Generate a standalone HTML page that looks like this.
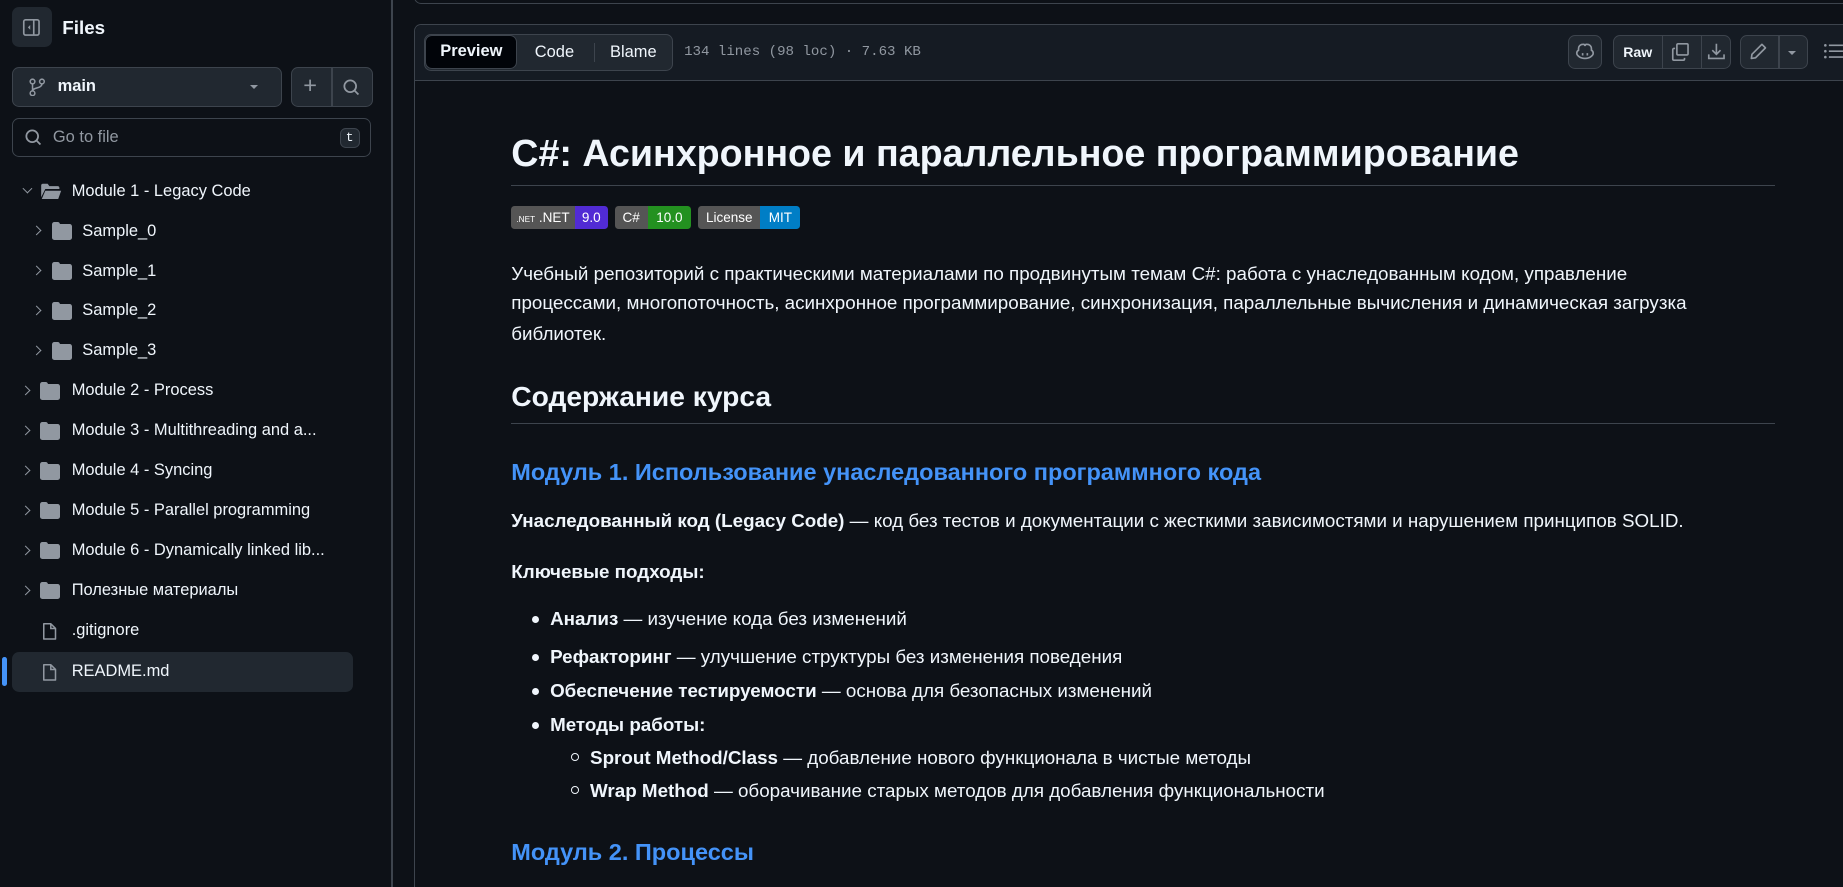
<!DOCTYPE html>
<html><head><meta charset="utf-8"><style>
html,body{margin:0;padding:0;background:#0d1117;overflow:hidden;width:1843px;height:887px}
#w{zoom:1.17538;position:relative;width:1568px;height:755px;overflow:hidden;font-family:"Liberation Sans","DejaVu Sans",sans-serif;color:#f0f6fc;font-size:14px}
.a{position:absolute;white-space:nowrap}
.btn{position:absolute;background:#212830;border:1px solid #3d444d;border-radius:6px;box-sizing:border-box}
.row{position:absolute;left:10px;width:290px;height:34px;font-size:14px;line-height:34px;color:#f0f6fc}
.row .t{position:absolute;white-space:nowrap}
.chev{position:absolute;top:13px;width:5px;height:5px;border-right:1.5px solid #9198a1;border-bottom:1.5px solid #9198a1;transform:rotate(-45deg)}
.fold{position:absolute;top:11px;width:17px;height:13px;background:#9198a1;border-radius:2px}
.fold:before{content:"";position:absolute;left:0;top:-2px;width:7px;height:4px;background:#9198a1;border-radius:2px 2px 0 0}
.md{font-size:16px}
.md .l{position:absolute;white-space:nowrap;left:435px;line-height:24px}
b{font-weight:700}
.bul{position:absolute;width:6px;height:6px;border-radius:50%;background:#f0f6fc}
.cir{position:absolute;width:5px;height:5px;border-radius:50%;border:1px solid #f0f6fc}
.badge{position:absolute;top:175px;height:20px;border-radius:3px;overflow:hidden;font-size:11.5px;line-height:20px;display:flex;color:#fff}
.badge span{display:block;text-align:center}
</style></head><body><div id="w">
<div class="a" style="left:333px;top:0;width:1px;height:755px;background:#3d444d"></div>
<div class="btn" style="left:10px;top:6px;width:34px;height:34px;background:#212830;border:none"></div>
<svg class="a" style="left:19px;top:15px" width="16" height="16" viewBox="0 0 16 16"><rect x="1.5" y="1.5" width="13" height="13" rx="1.5" fill="none" stroke="#9198a1" stroke-width="1.4"/><line x1="10" y1="2" x2="10" y2="14" stroke="#9198a1" stroke-width="1.4"/><path d="M7 6 L5 8 L7 10Z" fill="#9198a1"/></svg>
<div class="a" style="left:53px;top:14px;font-size:16px;font-weight:700;line-height:20px">Files</div>
<div class="btn" style="left:10px;top:57px;width:230px;height:34px"></div>
<svg class="a" style="left:25px;top:66px" width="14" height="16" viewBox="0 0 14 16"><circle cx="3" cy="3" r="2" fill="none" stroke="#9198a1" stroke-width="1.3"/><circle cx="3" cy="13" r="2" fill="none" stroke="#9198a1" stroke-width="1.3"/><circle cx="11" cy="3" r="2" fill="none" stroke="#9198a1" stroke-width="1.3"/><path d="M3 5v6M11 5c0 4-8 3-8 6" fill="none" stroke="#9198a1" stroke-width="1.3"/></svg>
<div class="a" style="left:49px;top:65px;font-size:14px;font-weight:700;line-height:18px">main</div>
<div class="a" style="left:213px;top:72px;width:0;height:0;border-left:4px solid transparent;border-right:4px solid transparent;border-top:4px solid #9198a1"></div>
<div class="btn" style="left:248px;top:57px;width:69px;height:34px"></div>
<div class="a" style="left:282px;top:58px;width:1px;height:32px;background:#3d444d"></div>
<div class="a" style="left:258px;top:62px;font-size:20px;color:#9198a1;line-height:22px">+</div>
<svg class="a" style="left:291px;top:66px" width="16" height="16" viewBox="0 0 16 16"><circle cx="7" cy="7" r="5" fill="none" stroke="#9198a1" stroke-width="1.5"/><path d="M10.5 10.5L14 14" stroke="#9198a1" stroke-width="1.5"/></svg>
<div class="a" style="left:10px;top:100px;width:306px;height:34px;border:1px solid #3d444d;border-radius:6px;box-sizing:border-box;background:#0d1117"></div>
<svg class="a" style="left:20px;top:109px" width="16" height="16" viewBox="0 0 16 16"><circle cx="7" cy="7" r="5" fill="none" stroke="#9198a1" stroke-width="1.5"/><path d="M10.5 10.5L14 14" stroke="#9198a1" stroke-width="1.5"/></svg>
<div class="a" style="left:45px;top:108px;font-size:14px;color:#9198a1;line-height:18px">Go to file</div>
<div class="a" style="left:289px;top:109px;width:17px;height:17px;border:1px solid #3d444d;border-radius:5px;box-sizing:border-box;background:#212830;font-family:'Liberation Mono',monospace;font-size:11px;text-align:center;line-height:15px;color:#f0f6fc">t</div>

<div class="row" style="top:146px"><div class="chev" style="left:10px;transform:rotate(45deg);top:11px"></div>
<svg class="a" style="left:24px;top:9px" width="19" height="16" viewBox="0 0 19 16"><path d="M1 3a1.5 1.5 0 011.5-1.5h4l1.5 2h7a1.5 1.5 0 011.5 1.5v1H4.5L1 13z" fill="#9198a1"/><path d="M4.5 7.5H18l-2.5 7H1.5z" fill="#9198a1"/></svg>
<div class="t" style="left:51px">Module 1 - Legacy Code</div></div>
<div class="row" style="top:180px"><div class="chev" style="left:18px"></div><div class="fold" style="left:34px"></div><div class="t" style="left:60px">Sample_0</div></div>
<div class="row" style="top:214px"><div class="chev" style="left:18px"></div><div class="fold" style="left:34px"></div><div class="t" style="left:60px">Sample_1</div></div>
<div class="row" style="top:248px"><div class="chev" style="left:18px"></div><div class="fold" style="left:34px"></div><div class="t" style="left:60px">Sample_2</div></div>
<div class="row" style="top:282px"><div class="chev" style="left:18px"></div><div class="fold" style="left:34px"></div><div class="t" style="left:60px">Sample_3</div></div>
<div class="row" style="top:316px"><div class="chev" style="left:9px"></div><div class="fold" style="left:24px"></div><div class="t" style="left:51px">Module 2 - Process</div></div>
<div class="row" style="top:350px"><div class="chev" style="left:9px"></div><div class="fold" style="left:24px"></div><div class="t" style="left:51px">Module 3 - Multithreading and a...</div></div>
<div class="row" style="top:384px"><div class="chev" style="left:9px"></div><div class="fold" style="left:24px"></div><div class="t" style="left:51px">Module 4 - Syncing</div></div>
<div class="row" style="top:418px"><div class="chev" style="left:9px"></div><div class="fold" style="left:24px"></div><div class="t" style="left:51px">Module 5 - Parallel programming</div></div>
<div class="row" style="top:452px"><div class="chev" style="left:9px"></div><div class="fold" style="left:24px"></div><div class="t" style="left:51px">Module 6 - Dynamically linked lib...</div></div>
<div class="row" style="top:486px"><div class="chev" style="left:9px"></div><div class="fold" style="left:24px"></div><div class="t" style="left:51px">Полезные материалы</div></div>
<div class="row" style="top:520px"><svg class="a" style="left:26px;top:9px" width="13" height="16" viewBox="0 0 13 16"><path d="M1.5 1.5h6l4 4v9h-10z" fill="none" stroke="#9198a1" stroke-width="1.3" stroke-linejoin="round"/><path d="M7.5 1.5v4h4" fill="none" stroke="#9198a1" stroke-width="1.3"/></svg><div class="t" style="left:51px">.gitignore</div></div>
<div class="row" style="top:555px;background:#212830;border-radius:6px"><svg class="a" style="left:26px;top:9px" width="13" height="16" viewBox="0 0 13 16"><path d="M1.5 1.5h6l4 4v9h-10z" fill="none" stroke="#9198a1" stroke-width="1.3" stroke-linejoin="round"/><path d="M7.5 1.5v4h4" fill="none" stroke="#9198a1" stroke-width="1.3"/></svg><div class="t" style="left:51px">README.md</div></div>
<div class="a" style="left:2px;top:559px;width:4px;height:25px;border-radius:2px;background:#4493f8"></div>

<div class="a" style="left:352px;top:-10px;width:1300px;height:13px;border:1px solid #3d444d;border-radius:6px;box-sizing:border-box"></div>
<div class="a" style="left:352px;top:20px;width:1300px;height:735px;border:1px solid #3d444d;border-bottom:none;border-radius:6px 6px 0 0;box-sizing:border-box"></div>
<div class="a" style="left:353px;top:21px;width:1300px;height:47px;background:#151b23;border-bottom:1px solid #3d444d;border-radius:6px 0 0 0"></div>
<div class="btn" style="left:361px;top:29px;width:212px;height:31px;background:#212830"></div>
<div class="a" style="left:362px;top:30px;width:78px;height:29px;background:#010409;border:1px solid #3d444d;border-radius:6px;box-sizing:border-box;text-align:center;font-weight:700;line-height:27px">Preview</div>
<div class="a" style="left:455px;top:36px;line-height:18px">Code</div>
<div class="a" style="left:505px;top:37px;width:1px;height:16px;background:#3d444d"></div>
<div class="a" style="left:519px;top:36px;line-height:18px">Blame</div>
<div class="a" style="left:582px;top:37px;font-family:'Liberation Mono',monospace;font-size:12px;color:#9198a1;line-height:16px">134 lines (98 loc) · 7.63 KB</div>
<div class="btn" style="left:1334px;top:30px;width:29px;height:29px"></div>
<svg class="a" style="left:1340px;top:36px" width="17" height="16" viewBox="0 0 17 16"><path d="M3 6c0-3 2-4 4-4 1 0 1.5.5 1.5 1.5C8.5 2.5 9 2 10 2c2 0 4 1 4 4v1c1 .5 1.5 1.5 1.5 2.5 0 2-3 4.5-7 4.5s-7-2.5-7-4.5C1.5 8.5 2 7.5 3 7z" fill="none" stroke="#9198a1" stroke-width="1.4"/><path d="M6.5 9.5v2M10.5 9.5v2" stroke="#9198a1" stroke-width="1.4"/></svg>
<div class="btn" style="left:1372px;top:30px;width:101px;height:29px"></div>
<div class="a" style="left:1414px;top:31px;width:1px;height:27px;background:#3d444d"></div>
<div class="a" style="left:1447px;top:31px;width:1px;height:27px;background:#3d444d"></div>
<div class="a" style="left:1381px;top:37px;font-size:12px;font-weight:700;line-height:16px">Raw</div>
<svg class="a" style="left:1422px;top:36px" width="16" height="17" viewBox="0 0 16 17"><rect x="5" y="1.5" width="9.5" height="9.5" rx="1" fill="none" stroke="#9198a1" stroke-width="1.4"/><path d="M3.5 5.5h-1a1 1 0 00-1 1v8a1 1 0 001 1h8a1 1 0 001-1v-1" fill="none" stroke="#9198a1" stroke-width="1.4"/></svg>
<svg class="a" style="left:1452px;top:36px" width="16" height="16" viewBox="0 0 16 16"><path d="M8 1.5v9M4.5 7l3.5 3.5L11.5 7M1.5 10.5v3.5h13v-3.5" fill="none" stroke="#9198a1" stroke-width="1.4"/></svg>
<div class="btn" style="left:1480px;top:30px;width:58px;height:29px"></div>
<div class="a" style="left:1513px;top:31px;width:1px;height:27px;background:#3d444d"></div>
<svg class="a" style="left:1488px;top:36px" width="16" height="16" viewBox="0 0 16 16"><path d="M11 2l3 3-8.5 8.5L2 14l.5-3.5z" fill="none" stroke="#9198a1" stroke-width="1.4" stroke-linejoin="round"/></svg>
<div class="a" style="left:1521px;top:43px;width:0;height:0;border-left:4px solid transparent;border-right:4px solid transparent;border-top:4px solid #9198a1"></div>
<svg class="a" style="left:1551px;top:37px" width="17" height="14" viewBox="0 0 17 14"><circle cx="2" cy="2" r="1.1" fill="#9198a1"/><circle cx="2" cy="7" r="1.1" fill="#9198a1"/><circle cx="2" cy="12" r="1.1" fill="#9198a1"/><path d="M5 2h12M5 7h12M5 12h12" stroke="#9198a1" stroke-width="1.4"/></svg>

<div class="md">
<div class="l" style="top:111px;font-size:32px;font-weight:700;line-height:40px">C#: Асинхронное и параллельное программирование</div>
<div class="a" style="left:435px;top:157px;width:1075px;height:1px;background:#3d444d"></div>
<div class="badge" style="left:435px;width:82px"><span style="background:#555;width:54px"><small style="font-size:7px">.NET</small> .NET</span><span style="background:#512bd4;width:28px">9.0</span></div>
<div class="badge" style="left:523px;width:65px"><span style="background:#555;width:28px">C#</span><span style="background:#239120;width:37px">10.0</span></div>
<div class="badge" style="left:594px;width:87px"><span style="background:#555;width:53px">License</span><span style="background:#007ec6;width:34px">MIT</span></div>
<div class="l" style="top:221px">Учебный репозиторий с практическими материалами по продвинутым темам C#: работа с унаследованным кодом, управление</div>
<div class="l" style="top:246px">процессами, многопоточность, асинхронное программирование, синхронизация, параллельные вычисления и динамическая загрузка</div>
<div class="l" style="top:272px">библиотек.</div>
<div class="l" style="top:322px;font-size:24px;font-weight:700;line-height:32px">Содержание курса</div>
<div class="a" style="left:435px;top:360px;width:1075px;height:1px;background:#3d444d"></div>
<div class="l" style="top:389px;font-size:20px;font-weight:600;color:#4493f8;line-height:26px">Модуль 1. Использование унаследованного программного кода</div>
<div class="l" style="top:431px"><b>Унаследованный код (Legacy Code)</b> — код без тестов и документации с жесткими зависимостями и нарушением принципов SOLID.</div>
<div class="l" style="top:475px"><b>Ключевые подходы:</b></div>
<div class="bul" style="left:453px;top:524px"></div><div class="l" style="left:468px;top:515px"><b>Анализ</b> — изучение кода без изменений</div>
<div class="bul" style="left:453px;top:556px"></div><div class="l" style="left:468px;top:547px"><b>Рефакторинг</b> — улучшение структуры без изменения поведения</div>
<div class="bul" style="left:453px;top:585px"></div><div class="l" style="left:468px;top:576px"><b>Обеспечение тестируемости</b> — основа для безопасных изменений</div>
<div class="bul" style="left:453px;top:614px"></div><div class="l" style="left:468px;top:605px"><b>Методы работы:</b></div>
<div class="cir" style="left:486px;top:641px"></div><div class="l" style="left:502px;top:633px"><b>Sprout Method/Class</b> — добавление нового функционала в чистые методы</div>
<div class="cir" style="left:486px;top:669px"></div><div class="l" style="left:502px;top:661px"><b>Wrap Method</b> — оборачивание старых методов для добавления функциональности</div>
<div class="l" style="top:712px;font-size:20px;font-weight:600;color:#4493f8;line-height:26px">Модуль 2. Процессы</div>
</div>
</div></body></html>
